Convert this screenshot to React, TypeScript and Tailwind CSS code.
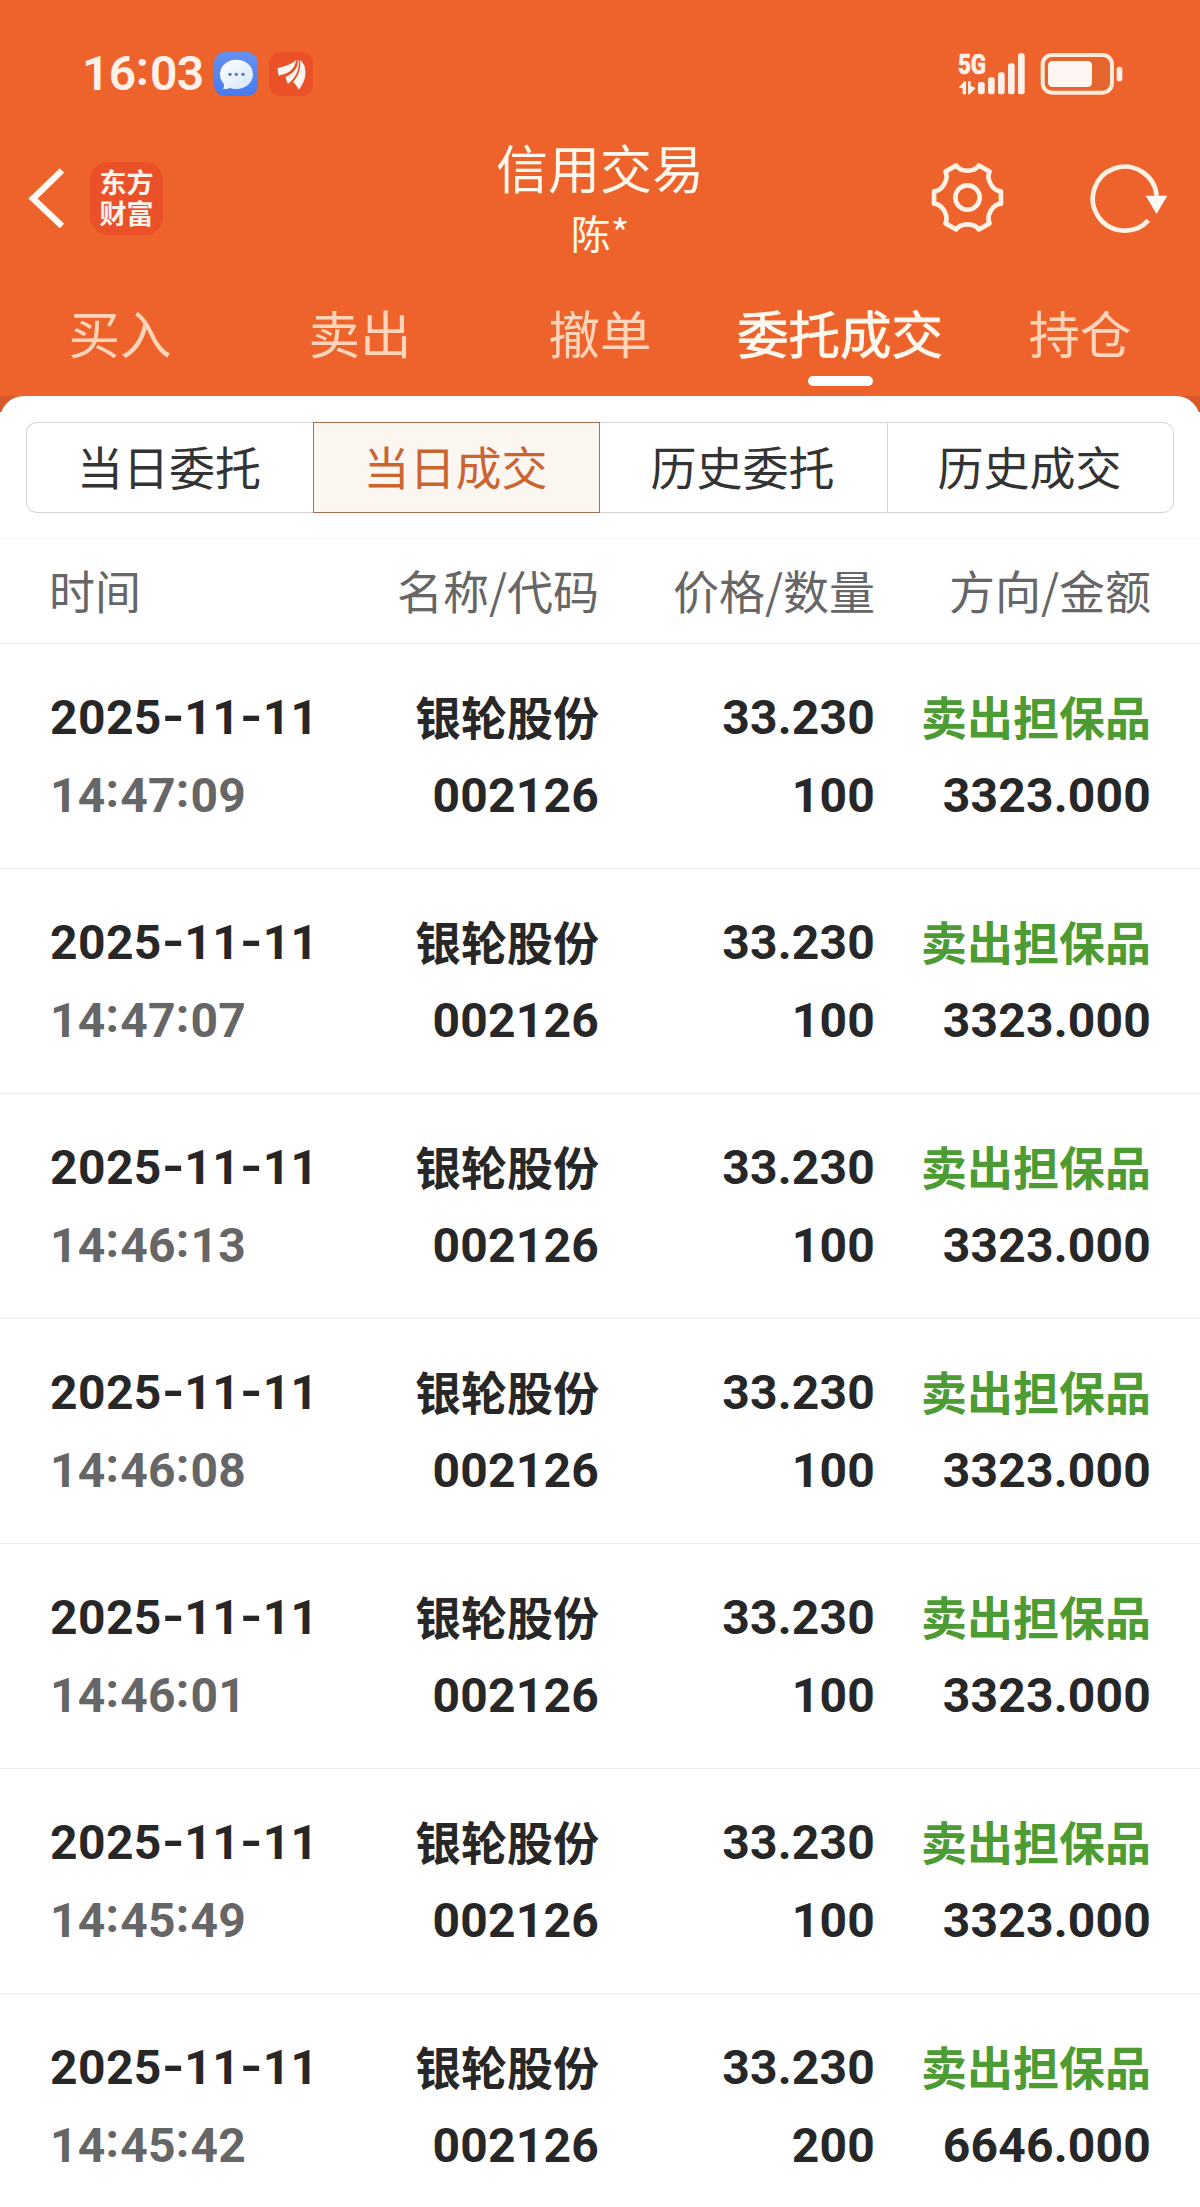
const CJK = "font-['Noto_Sans_CJK_SC',sans-serif]";
const NUM = "font-['Roboto','Noto_Sans_CJK_SC',sans-serif]";

const tabs = ["买入", "卖出", "撤单", "委托成交", "持仓"];
const segments = ["当日委托", "当日成交", "历史委托", "历史成交"];
const trades = [
  { time: "14:47:09", qty: "100", amount: "3323.000" },
  { time: "14:47:07", qty: "100", amount: "3323.000" },
  { time: "14:46:13", qty: "100", amount: "3323.000" },
  { time: "14:46:08", qty: "100", amount: "3323.000" },
  { time: "14:46:01", qty: "100", amount: "3323.000" },
  { time: "14:45:49", qty: "100", amount: "3323.000" },
  { time: "14:45:42", qty: "200", amount: "6646.000" },
];

// Six-toothed gear outline around (cx, cy).
function gearPath(cx: number, cy: number) {
  const at = (r: number, deg: number) => {
    const a = (deg * Math.PI) / 180;
    return `${(cx + r * Math.cos(a)).toFixed(1)} ${(cy + r * Math.sin(a)).toFixed(1)}`;
  };
  let d = `M${at(102, -10.5)}`;
  for (let i = 0; i < 6; i++) {
    const t = i * 60;
    d += `L${at(102, t + 10.5)}C${at(78, t + 15)} ${at(78, t + 45)} ${at(102, t + 49.5)}`;
  }
  return d + "Z";
}

// Colons and hyphens are lifted to the middle of the figures.
function Figures({ text }: { text: string }) {
  return (
    <>
      {text.split(/([:-])/).map((part, i) =>
        part === ":" ? (
          <span key={i} className="relative -top-[5px] tracking-[1.2px]">:</span>
        ) : part === "-" ? (
          <span key={i} className="relative -top-[1px] inline-block w-[22.5px] scale-x-[1.2] text-center tracking-normal">-</span>
        ) : (
          part
        ),
      )}
    </>
  );
}

function StatusBar() {
  return (
    <div className="flex h-[148px] items-start justify-between pl-[82px] pr-[77px] pt-[52px]">
      <div className="flex items-center">
        <span className={`${NUM} w-[132px] text-[48px] font-semibold leading-[44px] tracking-[-0.6px] text-[#fff1e9]`}>
          <Figures text="16:03" />
        </span>
        <svg width="44" height="44" viewBox="642 66 132 132">
          <defs>
            <linearGradient id="chat" x1="0" y1="0" x2="0" y2="1">
              <stop offset="0" stopColor="#6790ee" />
              <stop offset="1" stopColor="#467cf0" />
            </linearGradient>
            <linearGradient id="bubble" x1="0" y1="0" x2="1" y2="1">
              <stop offset="0" stopColor="#ffffff" />
              <stop offset="1" stopColor="#d5e6fb" />
            </linearGradient>
          </defs>
          <rect x="642" y="66" width="132" height="132" rx="34" fill="url(#chat)" />
          <path d="M709 89C737 89 759 108 759 133S737 177 709 177C702 177 696 176 690 173C684 177 677 178 669 177C672 173 673 167 671 161C664 153 660 144 660 133C660 108 681 89 709 89Z" fill="url(#bubble)" />
          <g fill="#4a78c8">
            <circle cx="690" cy="133" r="5" />
            <circle cx="709" cy="133" r="5" />
            <circle cx="729" cy="133" r="5" />
          </g>
        </svg>
        <svg className="ml-[11px]" width="44" height="44" viewBox="807 66 132 132">
          <rect x="807" y="66" width="132" height="132" rx="34" fill="#eb5128" />
          <g fill="#fff6f0">
            <path d="M833 114C852 110 872 104 889 90C885 109 874 126 856 131C849 133 842 134 836 137C834 130 833 122 833 114Z" />
            <path d="M893 91C896 111 881 131 857 141C858 148 860 155 864 161C880 149 900 126 896 91Z" />
            <path d="M900 91C904 118 893 141 879 156C886 162 892 170 896 179C909 163 917 145 916 126C916 109 910 98 900 91Z" />
          </g>
        </svg>
      </div>
      <svg className="mt-[1px] overflow-visible" width="165" height="42" viewBox="175 68 495 126">
        <text x="175" y="130" textLength="84" lengthAdjust="spacingAndGlyphs" fontFamily="Roboto" fontWeight="800" fontSize="82" fill="#fff1e9" stroke="#fff1e9" strokeWidth="2">5G</text>
        <g fill="#fff1e9">
          <path d="M177 172L194 153H199V192H189V174Z" />
          <path d="M205 153H213V166L228 173L210 192H205Z" />
          <rect x="235" y="155" width="20" height="37" rx="7" />
          <rect x="265" y="141" width="20" height="51" rx="7" />
          <rect x="295" y="126" width="20" height="66" rx="7" />
          <rect x="325" y="99" width="20" height="93" rx="7" />
          <rect x="355" y="69" width="20" height="123" rx="7" />
          <rect x="651" y="109" width="17" height="44" rx="8" />
        </g>
        <rect x="429" y="74" width="208" height="113" rx="28" fill="#e5652f" stroke="#ffeadc" strokeWidth="12" />
        <rect x="445" y="92" width="132" height="78" rx="13" fill="#fff5f2" />
      </svg>
    </div>
  );
}

function TitleBar() {
  return (
    <div className="grid h-[128px] grid-cols-[1fr_auto_1fr] px-[28px]">
      <div className="flex items-start pt-[14px]">
        <svg className="mt-[6px]" width="37" height="62" viewBox="0 0 37 62" fill="none" stroke="#fffaf5" strokeWidth="6.4" strokeLinejoin="miter" strokeLinecap="butt">
          <path d="M34 2.5L5 30.500L34 58" />
        </svg>
        <div className={`${CJK} ml-[25px] flex h-[73px] w-[73px] flex-col items-center justify-center rounded-[18px] bg-[#eb5128] pb-[3px] text-[27px] font-bold leading-[31px] text-[#fff3ea]`}>
          <span>东方</span>
          <span>财富</span>
        </div>
      </div>
      <div className={`${CJK} flex flex-col items-center text-[#fff6ec]`}>
        <h1 className="mt-[-16px] text-[52px] leading-[70px]">信用交易</h1>
        <p className="mt-[2px] text-[40px] leading-[56px]">陈*</p>
      </div>
      <div className="flex items-start justify-end pr-[4px]">
        <svg className="mt-[13px]" width="75" height="73" viewBox="90 394 225 219" fill="none" stroke="#fff1e4" strokeWidth="14" strokeLinejoin="round">
          <path d={gearPath(202.5, 503.5)} />
          <circle cx="202.500" cy="503.500" r="36.500" strokeWidth="14" />
        </svg>
        <svg className="ml-[84px] mt-[14px]" width="79" height="73" viewBox="567 396 237 219">
          <path d="M745 571A96 96 0 1 1 770 497" fill="none" stroke="#fff1e4" strokeWidth="14" />
          <path d="M737 497H802L769.500 552Z" fill="#fffaf5" />
        </svg>
      </div>
    </div>
  );
}

export default function App() {
  return (
    <div className="h-[2207px] w-[1200px] overflow-hidden bg-white">
      <header className="h-[412px] bg-[#ed632b]">
        <StatusBar />
        <TitleBar />
        <nav className={`${CJK} grid h-[120px] grid-cols-5 text-[51.5px]`}>
          {tabs.map((tab) =>
            tab === "委托成交" ? (
              <div key={tab} className="flex flex-col items-center text-[#fff8ee] [-webkit-text-stroke:0.8px_#fff8ee]">
                <span className="mt-[19px] whitespace-nowrap leading-[74px]">{tab}</span>
                <span className="mt-[7px] h-[10px] w-[65px] rounded-full bg-white" />
              </div>
            ) : (
              <div key={tab} className="flex flex-col items-center text-[#fed5bb]">
                <span className="mt-[19px] leading-[74px]">{tab}</span>
              </div>
            ),
          )}
        </nav>
        <div className="h-[16px] overflow-hidden bg-[#d8592a]">
          <div className="h-[40px] rounded-t-[24px] bg-white" />
        </div>
      </header>
      <main className={CJK}>
        <div className="mx-[26px] mt-[10px] grid h-[91px] grid-cols-4 text-[46px] leading-[85px] text-[#333]">
          {segments.map((s, i) => (
            <div
              key={s}
              className={
                i === 1
                  ? "border border-[#a5704f] bg-[#fcf6f1] text-center text-[#ca6431]"
                  : i === 0
                    ? "rounded-l-[11px] border border-r-0 border-[#d5d7d6] text-center"
                    : i === 2
                      ? "border-y border-[#d5d5d5] text-center"
                      : "rounded-r-[11px] border border-[#d5d5d5] text-center"
              }
            >
              <span className="-ml-[2px]">{s}</span>
            </div>
          ))}
        </div>
        <div className="mt-[25px] grid h-[106px] grid-cols-[1fr_298px_276px_276px] border-y border-t-[#f6f6f6] border-b-[#e9e9e9] pl-[49px] pr-[49px] text-right text-[46px] leading-[101px] text-[#666]">
          <span className="text-left">时间</span>
          <span>名称/代码</span>
          <span>价格/数量</span>
          <span>方向/金额</span>
        </div>
        {trades.map((t) => (
          <div
            key={t.time}
            className="grid h-[225px] grid-cols-[1fr_200px_276px_276px] grid-rows-[78px_78px] border-b border-[#ececec] pl-[50px] pr-[49px] pt-[35px] text-right text-[46px] font-bold leading-[78px] text-[#272727]"
          >
            <span className={`${NUM} text-left text-[48px] tracking-[0.4px]`}><Figures text="2025-11-11" /></span>
            <span className="-mt-[3px]">银轮股份</span>
            <span className={`${NUM} text-[48px] tracking-[0.2px]`}>33.230</span>
            <span className="-mt-[3px] text-[#4c9c33]">卖出担保品</span>
            <span className={`${NUM} text-left text-[48px] tracking-[0.2px] text-[#666]`}><Figures text={t.time} /></span>
            <span className={`${NUM} text-[48px] tracking-[0.2px]`}>002126</span>
            <span className={`${NUM} text-[48px] tracking-[0.2px]`}>{t.qty}</span>
            <span className={`${NUM} text-[48px] tracking-[0.2px]`}>{t.amount}</span>
          </div>
        ))}
      </main>
    </div>
  );
}
